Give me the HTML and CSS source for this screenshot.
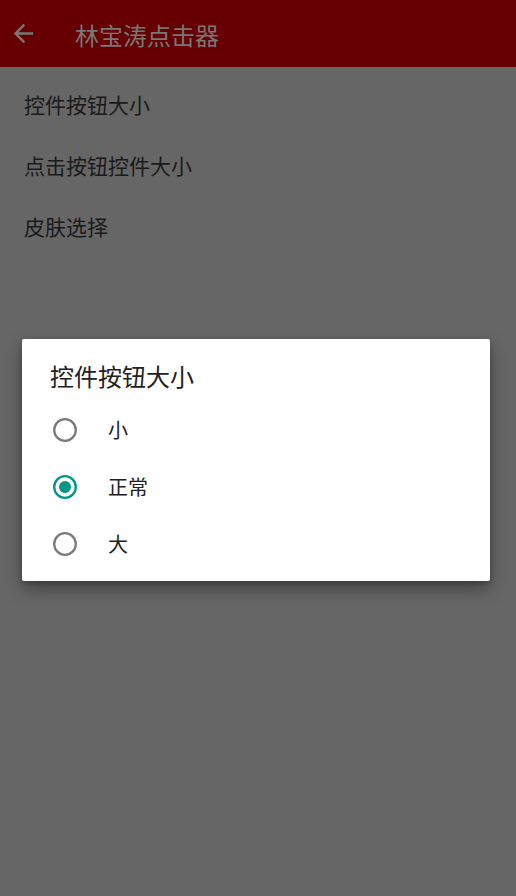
FILE: index.html
```html
<!DOCTYPE html>
<html lang="zh-CN">
<head>
<meta charset="utf-8">
<title>林宝涛点击器</title>
<link rel="stylesheet" href="styles.css">
</head>
<body>
<div class="screen">
  <header class="toolbar">
    <svg class="back" viewBox="0 0 24 24" width="29" height="29"><path d="M20 11H7.83l5.59-5.59L12 4l-8 8 8 8 1.41-1.41L7.83 13H20v-2z" fill="#777777"/></svg>
    <span class="title">林宝涛点击器</span>
  </header>
  <ul class="list">
    <li class="item">控件按钮大小</li>
    <li class="item">点击按钮控件大小</li>
    <li class="item">皮肤选择</li>
  </ul>
  <div class="dialog">
    <div class="dialog-title">控件按钮大小</div>
    <div class="option">
      <svg class="radio" viewBox="0 0 24 24" width="24" height="24"><circle cx="12" cy="12" r="10.8" fill="none" stroke="#7a7a7a" stroke-width="2.3"/></svg>
      <span class="label">小</span>
    </div>
    <div class="option">
      <svg class="radio" viewBox="0 0 24 24" width="24" height="24"><circle cx="12" cy="12" r="10.8" fill="none" stroke="#009688" stroke-width="2.3"/><circle cx="12" cy="12" r="6" fill="#009688"/></svg>
      <span class="label">正常</span>
    </div>
    <div class="option">
      <svg class="radio" viewBox="0 0 24 24" width="24" height="24"><circle cx="12" cy="12" r="10.8" fill="none" stroke="#7a7a7a" stroke-width="2.3"/></svg>
      <span class="label">大</span>
    </div>
  </div>
</div>
</body>
</html>
```
FILE: styles.css
```css
html, body {
  margin: 0;
  padding: 0;
  background: #666666;
}
body {
  font-family: "Noto Sans CJK SC", "Noto Sans", sans-serif;
}
.screen {
  position: relative;
  width: 516px;
  height: 896px;
  overflow: hidden;
  background: #666666;
}
.toolbar {
  height: 67px;
  background: #660000;
  display: flex;
  align-items: center;
  padding-left: 9px;
  box-sizing: border-box;
}
.back {
  display: block;
  margin-top: -1px;
}
.title {
  margin-left: 37px;
  font-size: 24px;
  color: #777777;
  line-height: 32px;
  margin-top: 2px;
}
.list {
  list-style: none;
  margin: 0;
  padding: 7px 0 0 24px;
}
.item {
  height: 61px;
  line-height: 61px;
  font-size: 21px;
  color: #1a1a1a;
}
.dialog {
  position: absolute;
  left: 22px;
  top: 339px;
  width: 468px;
  height: 242px;
  box-sizing: border-box;
  background: #ffffff;
  border-radius: 2px;
  box-shadow: 0 8px 18px rgba(0, 0, 0, 0.35), 0 2px 5px rgba(0, 0, 0, 0.2);
  padding: 21px 0 0 0;
}
.dialog-title {
  padding-left: 28px;
  font-size: 24px;
  line-height: 32px;
  color: #212121;
}
.option {
  display: flex;
  align-items: center;
  height: 57px;
  padding-left: 31px;
}
.dialog-title + .option {
  margin-top: 9px;
}
.radio {
  display: block;
  flex: none;
}
.label {
  margin-left: 31px;
  font-size: 20px;
  color: #212121;
  line-height: 28px;
}
```
